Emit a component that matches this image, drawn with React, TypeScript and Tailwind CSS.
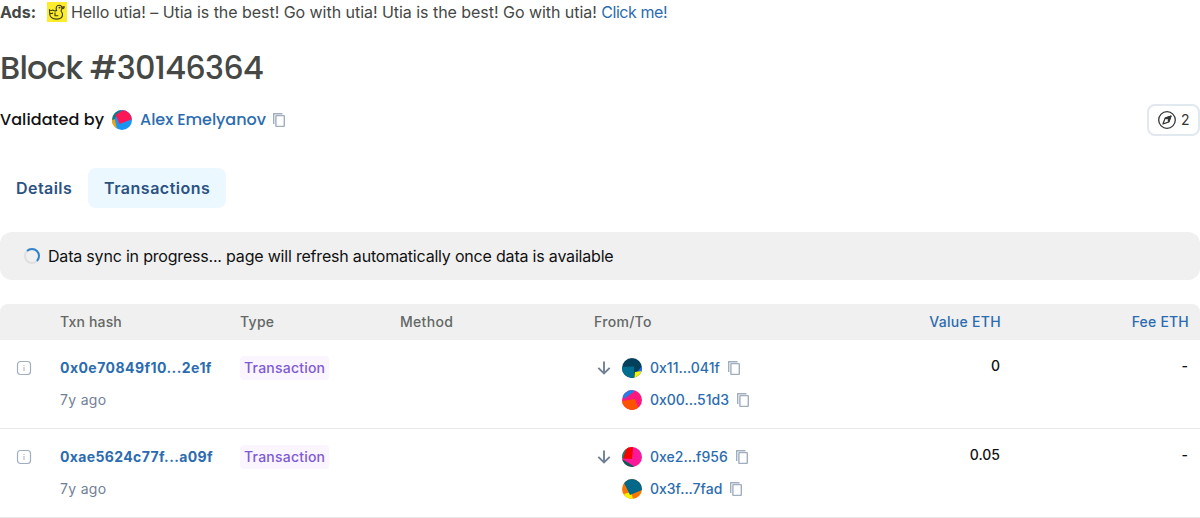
import React from 'react';

type Shape = { fill: string; points: string };
type Address = { label: string; base: string; shapes: Shape[] };

const validator: Address = {
  label: 'Alex Emelyanov',
  base: '#1a96f2',
  shapes: [
    { fill: '#f3a505', points: '0,4 2,6 5,19 0,18' },
    { fill: '#0c7a8c', points: '1,0 11,-1 4,6 3,9 0,10' },
    { fill: '#fb1856', points: '3.5,5 14,-2 22,8.5 7.5,14' },
  ],
};

const transactions: { hash: string; from: Address; to: Address; value: string }[] = [
  {
    hash: '0x0e70849f10...2e1f',
    value: '0',
    from: {
      label: '0x11...041f',
      base: '#03405c',
      shapes: [
        { fill: '#2467e8', points: '20,8 20,14 15,14' },
        { fill: '#f5f200', points: '13,14 20,13 18,20 12,20' },
        { fill: '#016d8f', points: '0,9 12,8.5 12.5,20 0,20' },
      ],
    },
    to: {
      label: '0x00...51d3',
      base: '#fb187f',
      shapes: [
        { fill: '#247ee1', points: '2,9 13,1 8,-1 0,5' },
        { fill: '#fc5300', points: '0,11 13,9 17,20 0,20' },
      ],
    },
  },
  {
    hash: '0xae5624c77f...a09f',
    value: '0.05',
    from: {
      label: '0xe2...f956',
      base: '#fb1899',
      shapes: [
        { fill: '#018e6f', points: '0,0 8,0 2,11 0,12' },
        { fill: '#035e56', points: '0,12 13,20 0,20' },
        { fill: '#f90000', points: '5,0 11,0 10,12 1,11.5' },
        { fill: '#247ee1', points: '16,1 20,5 20,8' },
      ],
    },
    to: {
      label: '0x3f...7fad',
      base: '#fb7600',
      shapes: [
        { fill: '#f5f200', points: '2,15 9,13 11,20 5,20' },
        { fill: '#01688a', points: '2,4 8,-3 22,6 20,11 8,16' },
      ],
    },
  },
];

function Avatar({ address }: { address: Address }) {
  return (
    <svg className="size-5 shrink-0 rounded-full" viewBox="0 0 20 20">
      <rect width="20" height="20" fill={address.base} />
      {address.shapes.map((s, i) => (
        <polygon key={i} fill={s.fill} points={s.points} />
      ))}
    </svg>
  );
}

function CopyIcon() {
  return (
    <svg className="ml-2 h-5 w-3 shrink-0 overflow-visible" viewBox="0 0 12 20" fill="none" stroke="#a0aec0" strokeWidth="1.4">
      <path d="M.7 14V3.7h8.8" />
      <rect x="2.9" y="5.6" width="8.4" height="10.8" rx=".4" />
    </svg>
  );
}

function AddressLine({ address }: { address: Address }) {
  return (
    <div className="flex h-6 items-center">
      <Avatar address={address} />
      <a className="ml-2 text-[#2b6cb0]">{address.label}</a>
      <CopyIcon />
    </div>
  );
}

function DuckIcon() {
  return (
    <svg className="mr-1 ml-[11px] size-5 bg-[#fcec2c]" viewBox="0 0 20 20" fill="none" stroke="#343a16" strokeWidth="1.1">
      <path d="M9.6 8.4C8.4 5.8 9.6 3.3 12 3.3c2 0 3.2 1.4 3 3.2-.2 1.3-1.3 1.9-.8 2.8.8.9 1.3 1.9 1.3 3.2 0 3-2.3 4.6-5.7 4.6-4.2 0-7-1.8-7.1-5.6L2.5 7.9c1.2.8 2.6.7 3.6.2 1 .8 2.2 1 3.5.3Z" />
      <path d="M8 10.5v3.2h3.3M3 11.2c1.2.6 2.2.4 3-.2" />
      <path d="m15 5 2.4-.4-.4 1.8-2 .3Z" fill="#b5422a" strokeWidth=".8" />
      <circle cx="12.5" cy="5.6" r=".4" fill="#343a16" />
    </svg>
  );
}

export default function App() {
  return (
    <main className="h-[518px] w-full overflow-hidden bg-white font-['Inter',sans-serif] text-base text-[#101112]">
      <div className="flex h-6 items-center text-[#454845]">
        <span className="font-bold">Ads:</span>
        <DuckIcon />
        <span className="tracking-[-0.04px]">
          Hello utia! – Utia is the best! Go with utia! Utia is the best! Go with utia! <a className="tracking-[-0.45px] text-[#2b6cb0]">Click me!</a>
        </span>
      </div>

      <h1 className="mt-6 h-10 font-['Poppins','Inter',sans-serif] text-[32px] leading-10 font-medium tracking-[-0.77px] text-[#454845]">Block #30146364</h1>

      <div className="mt-4 flex h-8 items-center justify-between">
        <div className="flex items-center font-['Poppins','Inter',sans-serif] font-medium">
          <span className="mr-2 tracking-[0.08px]">Validated by</span>
          <Avatar address={validator} />
          <a className="-mr-px ml-2 tracking-[-0.05px] text-[#2b6cb0]">{validator.label}</a>
          <CopyIcon />
        </div>
        <button className="flex h-8 w-[53px] items-center rounded-lg border-2 border-[#e2e8f0] pl-[9px] text-sm text-[#343735]">
          <svg className="mr-1 size-[18px]" viewBox="0 0 18 18" fill="none" stroke="#343735">
            <circle cx="9" cy="9" r="8.3" strokeWidth="1.3" />
            <path d="m13 5-2.1 5.9L5 13l2.1-5.9Z" strokeWidth="1.3" strokeLinejoin="round" />
            <path d="M13 5 7.1 7.1l3.8 3.8Z" fill="#343735" />
            <circle cx="9" cy="9" r="1" fill="#fff" stroke="none" />
          </svg>
          <span className="ml-px">2</span>
        </button>
      </div>

      <nav className="mt-8 flex h-10 font-semibold text-[#2c5282]">
        <button className="w-[88px] px-4 text-left tracking-[0.45px]">Details</button>
        <button className="w-[138px] rounded-lg bg-[#ebf8ff] pl-4 text-left tracking-[0.5px]">Transactions</button>
      </nav>

      <div className="mt-6 flex h-12 items-center rounded-xl bg-[#f0f0f0] pl-6">
        <svg className="mr-2 size-4" viewBox="0 0 16 16" fill="none" strokeWidth="2">
          <circle cx="8" cy="8" r="7" stroke="#dfdfdf" />
          <path d="M3.05 3.05A7 7 0 0 1 12.95 12.95" stroke="#3182ce" />
        </svg>
        <span className="tracking-[-0.195px]">Data sync in progress... page will refresh automatically once data is available</span>
      </div>

      <table className="mt-6 w-full table-fixed border-separate border-spacing-0 text-sm">
        <colgroup>
          <col className="w-[54px]" />
          <col className="w-[180px]" />
          <col className="w-[160px]" />
          <col className="w-[180px]" />
          <col className="w-[238px]" />
          <col className="w-[194px]" />
          <col className="w-[194px]" />
        </colgroup>
        <thead>
          <tr className="h-9 text-left tracking-[0.3px] text-[#636765] *:bg-[#f0f0f0] *:p-0 *:font-medium">
            <th className="rounded-tl-lg" />
            <th><span className="pl-1.5 tracking-[0.15px]">Txn hash</span></th>
            <th><span className="pl-1.5">Type</span></th>
            <th><span className="pl-1.5">Method</span></th>
            <th><span className="pl-5">From/To</span></th>
            <th className="text-right text-[#2b6cb0]"><span className="pr-[5px]">Value ETH</span></th>
            <th className="rounded-tr-lg text-right tracking-[0.2px] text-[#2b6cb0]"><span className="pr-[11px]">Fee ETH</span></th>
          </tr>
        </thead>
        <tbody>
          {transactions.map((tx, i) => (
            <tr key={tx.hash} className="h-[89px] font-medium *:border-b *:border-[#e8e8e8] *:p-0 *:pt-4 *:align-top">
              <td>
                <svg className="mt-1 ml-4 size-4" viewBox="0 0 16 16" fill="none" stroke="#a0aec0">
                  <rect x="1.5" y="1.5" width="13" height="13" rx="3" strokeWidth="1.2" />
                  <path d="M8 7v4M8 5v1" strokeWidth="1.3" opacity=".75" />
                </svg>
              </td>
              <td>
                <div className="flex flex-col gap-2 pl-1.5 leading-6">
                  <a className={i === 0 ? 'font-bold tracking-[0.45px] text-[#2b6cb0]' : 'font-bold tracking-[0.37px] text-[#2b6cb0]'}>{tx.hash}</a>
                  <span className="font-normal tracking-[0.3px] text-[#718096]">7y ago</span>
                </div>
              </td>
              <td><span className="ml-1.5 block h-6 w-[89px] rounded-sm bg-[#faf5ff] px-1 leading-6 tracking-[0.22px] text-[#805ad5]">Transaction</span></td>
              <td />
              <td>
                <div className="flex pl-5">
                  <svg className="mt-0.5 mr-2 size-5" viewBox="0 0 20 20" fill="none" stroke="#718096" strokeWidth="1.9">
                    <path d="M10 3.5v12M4.3 9.9l5.7 5.5 5.7-5.5" />
                  </svg>
                  <div className="flex flex-col gap-2">
                    <AddressLine address={tx.from} />
                    <AddressLine address={tx.to} />
                  </div>
                </div>
              </td>
              <td className="text-right leading-5"><div className="pr-1.5">{tx.value}</div></td>
              <td className="text-right leading-5"><div className="pr-3">-</div></td>
            </tr>
          ))}
        </tbody>
      </table>
    </main>
  );
}
